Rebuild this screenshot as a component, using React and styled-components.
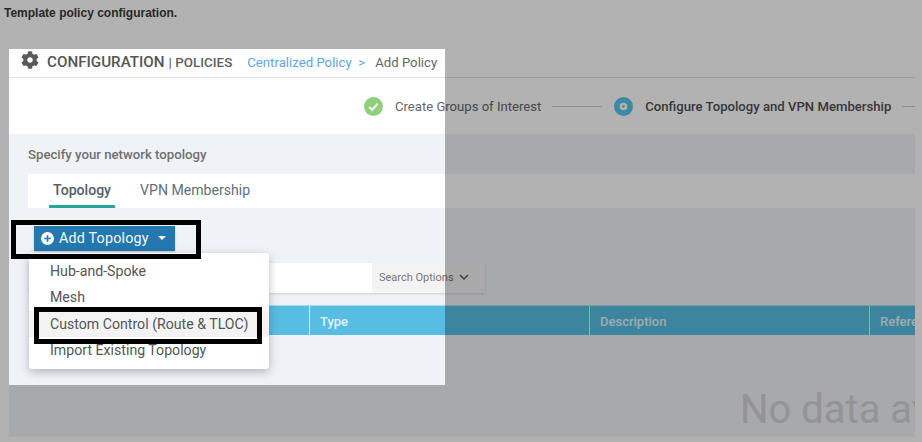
import React from "react";
import styled, { createGlobalStyle } from "styled-components";
import { FaCog } from "react-icons/fa";

const Global = createGlobalStyle`
  html, body { margin: 0; padding: 0; background: #fff; }
  body { font-family: Roboto, "Liberation Sans", sans-serif; }
`;

const Page = styled.div`
  position: relative;
  width: 922px;
  height: 442px;
  overflow: hidden;
  background: #fff;
`;

const Caption = styled.p`
  margin: 0;
  height: 49px;
  padding: 6px 0 0 4px;
  box-sizing: border-box;
  font: bold 12px/14px "Liberation Sans", sans-serif;
  color: #3a3a3a;
`;

const Frame = styled.div`
  width: 906px;
  height: 388px;
  margin-left: 9px;
  display: flex;
  flex-direction: column;
  overflow: hidden;
`;

const Header = styled.header`
  height: 29px;
  flex: none;
  box-sizing: border-box;
  display: flex;
  align-items: center;
  padding: 0 0 2px 12px;
  border-bottom: 1px solid #e0e0e0;
  background: #fff;
  white-space: nowrap;
`;

const Gear = styled(FaCog)`
  width: 18px;
  height: 18px;
  color: #5a5a5a;
  margin-right: 8px;
  margin-top: -5px;
  flex: none;
`;

const Title = styled.span`
  font-size: 15.2px;
  font-weight: 500;
  color: #555;
`;

const Sub = styled.span`
  font-size: 13.4px;
  font-weight: 500;
  color: #606060;
  margin-left: 4px;
`;

const Crumb = styled.span`
  font-size: 13.2px;
  color: ${(p) => (p.$link ? "#62a5e0" : "#666")};
  margin-left: ${(p) => p.$gap}px;
`;

const Steps = styled.div`
  height: 56px;
  flex: none;
  display: flex;
  align-items: center;
  padding-left: 355px;
  background: #fff;
`;

const Step = styled.span`
  font-size: ${(p) => (p.$active ? 13.15 : 13.1)}px;
  font-weight: ${(p) => (p.$active ? 500 : 400)};
  color: ${(p) => (p.$active ? "#505050" : "#666")};
  margin-left: 12px;
  white-space: nowrap;
`;

const Line = styled.span`
  width: ${(p) => p.$w}px;
  height: 1px;
  flex: none;
  background: #ccc;
  margin: 1px 12px 0 11px;
`;

const StepIcon = styled.svg`
  width: 19px;
  height: 19px;
  flex: none;
`;

const Body = styled.main`
  flex: 1;
  background: #eff2f7;
  padding: 13px 0 0 19px;
  position: relative;
`;

const Heading = styled.h2`
  margin: 0 0 12px;
  font-size: 13.2px;
  line-height: 15px;
  font-weight: 500;
  color: #707070;
`;

const Tabs = styled.nav`
  height: 34px;
  background: #fff;
  display: flex;
  padding-left: 21px;
  gap: 21px;
`;

const Tab = styled.span`
  box-sizing: border-box;
  height: 34px;
  padding: 8px 4px 0;
  font-size: 14.1px;
  line-height: 17px;
  font-weight: ${(p) => (p.$active ? 500 : 400)};
  color: ${(p) => (p.$active ? "#50626f" : "#5e6f7b")};
  border-bottom: 3px solid ${(p) => (p.$active ? "#23a79d" : "transparent")};
`;

const AddButton = styled.button`
  display: flex;
  align-items: center;
  box-sizing: border-box;
  width: 141px;
  height: 25px;
  margin: 18px 0 0 6px;
  padding: 0 0 1px 7px;
  border: 0;
  background: #2478b0;
  color: #f4f8fb;
  font: 400 14.3px Roboto, sans-serif;
  letter-spacing: 0.2px;
  box-shadow: 0 1px 2px rgba(0, 0, 0, 0.2);
`;

const Caret = styled.span`
  width: 0;
  height: 0;
  margin-left: 9px;
  border-left: 4px solid transparent;
  border-right: 4px solid transparent;
  border-top: 4px solid #fff;
`;

const SearchBar = styled.div`
  width: 456px;
  height: 30px;
  margin: 12px 0 0 1px;
  background: #fff;
  display: flex;
  justify-content: flex-end;
  box-shadow: 0 1px 2px rgba(0, 0, 0, 0.15);
`;

const SearchOptions = styled.div`
  width: 113px;
  display: flex;
  align-items: center;
  box-sizing: border-box;
  padding: 0 0 2px 7px;
  gap: 5px;
  background: #f3f3f3;
  font-size: 11px;
  color: #777;
`;

const TableHead = styled.div`
  display: grid;
  grid-template-columns: 280px 280px 280px 1fr;
  height: 30px;
  margin: 12px 0 0 1px;
  background: #58bde2;
  border-top: 1px solid #a9dcee;
  box-sizing: border-box;
`;

const Col = styled.div`
  box-sizing: border-box;
  padding-left: 10px;
  font-size: 13px;
  font-weight: 500;
  line-height: 31px;
  color: #e4f3f9;
  border-left: ${(p) => (p.$first ? 0 : "1px solid #e6f3f8")};
  white-space: nowrap;
  overflow: hidden;
`;

const Empty = styled.div`
  margin: 51px 0 0 712px;
  font-size: 40px;
  line-height: 47px;
  color: #d5d5d5;
  white-space: nowrap;
`;

/* Tour mask: a transparent window whose shadow dims everything around it */
const Spotlight = styled.div`
  position: absolute;
  left: 9px;
  top: 49px;
  width: 436px;
  height: 336px;
  box-shadow: 0 0 0 1000px rgba(0, 0, 0, 0.3);
`;

const Menu = styled.ul`
  position: absolute;
  left: 29px;
  top: 253px;
  width: 240px;
  height: 116px;
  margin: 0;
  padding: 5px 0 0;
  box-sizing: border-box;
  list-style: none;
  background: #fff;
  border-radius: 3px;
  box-shadow: 0 3px 10px rgba(0, 0, 0, 0.25);
`;

const MenuItem = styled.li`
  height: 26px;
  padding-left: 21px;
  margin-top: ${(p) => (p.$hot ? 1 : 0)}px;
  font-size: 14.15px;
  line-height: 26px;
  color: #555;
  background: ${(p) => (p.$hot ? "#f3f3f3" : "transparent")};
  white-space: nowrap;
`;

const Callout = styled.div`
  position: absolute;
  left: ${(p) => p.$x}px;
  top: ${(p) => p.$y}px;
  width: ${(p) => p.$w}px;
  height: ${(p) => p.$h}px;
  box-sizing: border-box;
  border: 5px solid #000;
`;

export default function App() {
  return (
    <Page>
      <Global />
      <Caption>Template policy configuration.</Caption>
      <Frame>
        <Header>
          <Gear />
          <Title>CONFIGURATION</Title>
          <Sub>| POLICIES</Sub>
          <Crumb $link $gap={15}>Centralized Policy&nbsp;&nbsp;&gt;</Crumb>
          <Crumb $gap={10}>Add Policy</Crumb>
        </Header>
        <Steps>
          <StepIcon viewBox="0 0 20 20">
            <circle cx="10" cy="10" r="10" fill="#8fd07f" />
            <path d="M5.5 10.5l3 3 6-6.5" fill="none" stroke="#fff" strokeWidth="2" />
          </StepIcon>
          <Step>Create Groups of Interest</Step>
          <Line $w={50} />
          <StepIcon viewBox="0 0 20 20">
            <circle cx="10" cy="10" r="7" fill="#fff" stroke="#58c4ec" strokeWidth="6" />
            <circle cx="10" cy="10" r="1.5" fill="#bbb" />
          </StepIcon>
          <Step $active>Configure Topology and VPN Membership</Step>
          <Line $w={14} />
        </Steps>
        <Body>
          <Heading>Specify your network topology</Heading>
          <Tabs>
            <Tab $active>Topology</Tab>
            <Tab>VPN Membership</Tab>
          </Tabs>
          <AddButton>
            <svg width="13" height="13" viewBox="0 0 14 14" style={{ marginRight: 5 }}>
              <circle cx="7" cy="7" r="7" fill="#fff" />
              <path d="M7 3.5v7M3.5 7h7" stroke="#2478b0" strokeWidth="1.8" />
            </svg>
            Add Topology
            <Caret />
          </AddButton>
          <SearchBar>
            <SearchOptions>
              Search Options
              <svg width="10" height="6" viewBox="0 0 10 6">
                <path d="M1 1l4 4 4-4" fill="none" stroke="#555" strokeWidth="1.4" />
              </svg>
            </SearchOptions>
          </SearchBar>
          <TableHead>
            <Col $first />
            <Col>Type</Col>
            <Col>Description</Col>
            <Col>Reference Count</Col>
          </TableHead>
          <Empty>No data available</Empty>
        </Body>
      </Frame>
      <Spotlight />
      <Menu>
        <MenuItem>Hub-and-Spoke</MenuItem>
        <MenuItem>Mesh</MenuItem>
        <MenuItem $hot>Custom Control (Route &amp; TLOC)</MenuItem>
        <MenuItem>Import Existing Topology</MenuItem>
      </Menu>
      <Callout $x={11} $y={220} $w={190} $h={39} />
      <Callout $x={34} $y={307} $w={228} $h={37} />
    </Page>
  );
}
